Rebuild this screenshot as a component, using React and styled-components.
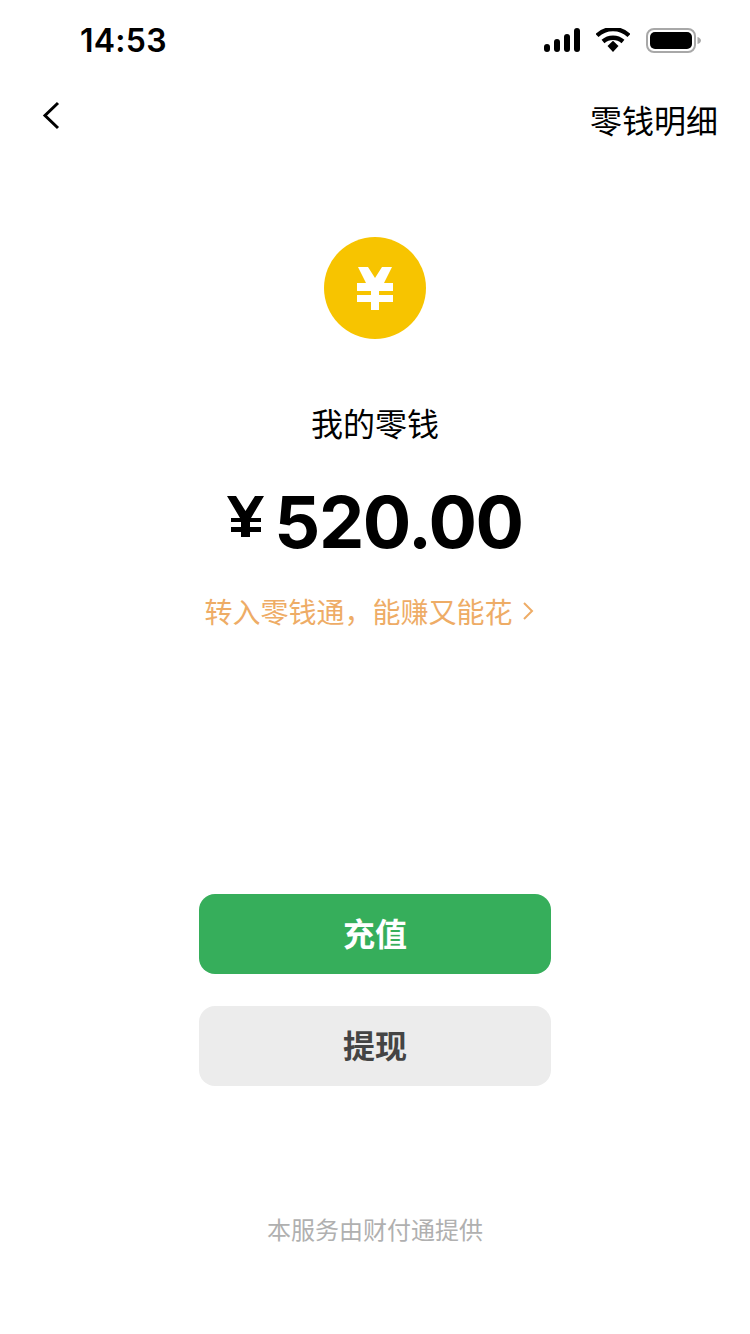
import React from "react";
import styled, { createGlobalStyle } from "styled-components";

const GlobalStyle = createGlobalStyle`
  html, body {
    margin: 0;
    padding: 0;
    background: #ffffff;
    font-family: "Noto Sans CJK SC", "Liberation Sans", sans-serif;
  }
`;

const Page = styled.div`
  width: 750px;
  height: 1334px;
  display: flex;
  flex-direction: column;
  overflow: hidden;
  background: #ffffff;
  color: #000000;
`;

const StatusBar = styled.div`
  height: 80px;
  padding: 0 49px 0 80px;
  display: flex;
  align-items: center;
  justify-content: space-between;
  box-sizing: border-box;
`;

const Time = styled.span`
  font-family: "Inter", "Liberation Sans", sans-serif;
  font-size: 32px;
  font-weight: 600;
  letter-spacing: 0.25px;
  color: #000000;
`;

const StatusIcons = styled.div`
  display: flex;
  align-items: center;
  gap: 16px;
`;

const NavBar = styled.div`
  height: 80px;
  padding: 0 32px 0 40px;
  display: flex;
  align-items: center;
  justify-content: space-between;
  box-sizing: border-box;
`;

const BackButton = styled.div`
  display: flex;
  margin-top: -8px;
`;

const NavTitle = styled.span`
  font-size: 32px;
  line-height: 44px;
  margin-top: -3px;
`;

const Main = styled.div`
  display: flex;
  flex-direction: column;
  align-items: center;
`;

const Coin = styled.div`
  width: 102px;
  height: 102px;
  margin-top: 77px;
  border-radius: 50%;
  background: #f7c400;
  display: flex;
  align-items: center;
  justify-content: center;
`;

const Label = styled.div`
  margin-top: 61px;
  font-size: 32px;
  line-height: 44px;
`;

const Amount = styled.div`
  margin-top: 32px;
  display: flex;
  align-items: center;
  gap: 10px;
  height: 92px;
`;

const AmountMark = styled.div`
  display: flex;
  margin-top: -11px;
`;

const Digits = styled.span`
  font-family: "Inter", "Liberation Sans", sans-serif;
  font-size: 72px;
  font-weight: 700;
  line-height: 92px;
  letter-spacing: -1.4px;
`;

const PromoLink = styled.div`
  margin-top: 24px;
  padding-right: 12px;
  display: flex;
  align-items: center;
  gap: 9px;
  font-size: 28px;
  line-height: 38px;
  color: #eeac66;
`;

const Actions = styled.div`
  margin-top: 264px;
  display: flex;
  flex-direction: column;
  gap: 32px;
`;

const ActionButton = styled.button`
  width: 352px;
  height: 80px;
  border: 0;
  border-radius: 16px;
  padding: 0 0 4px;
  font-family: inherit;
  font-size: 32px;
  font-weight: 700;
  background: ${(p) => (p.$primary ? "#36ae5b" : "#ececec")};
  color: ${(p) => (p.$primary ? "#ffffff" : "#444444")};
`;

const Footer = styled.div`
  margin-top: 127px;
  font-size: 24px;
  line-height: 32px;
  color: #b0b0b0;
`;

const SignalIcon = () => (
  <svg width="36" height="24" viewBox="0 0 36 24">
    <rect x="0" y="16" width="6" height="8" rx="3" fill="#000" />
    <rect x="10" y="11" width="6" height="13" rx="3" fill="#000" />
    <rect x="20" y="6" width="6" height="18" rx="3" fill="#000" />
    <rect x="30" y="0" width="6" height="24" rx="3" fill="#000" />
  </svg>
);

const WifiIcon = () => (
  <svg width="34" height="24" viewBox="0 0 34 24">
    <path d="M1 7.5C10 -1 24 -1 33 7.5" fill="none" stroke="#000" strokeWidth="4.4" />
    <path d="M7 13.5C12.8 8.5 21.2 8.5 27 13.5" fill="none" stroke="#000" strokeWidth="4.4" />
    <path d="M11.5 18L17 12.8L22.5 18L17 24Z" fill="#000" />
  </svg>
);

const BatteryIcon = () => (
  <svg width="55" height="25" viewBox="0 0 55 25">
    <rect x="1" y="1" width="48" height="23" rx="7" fill="none" stroke="#a8a8a8" strokeWidth="2" />
    <rect x="4" y="4" width="42" height="17" rx="5" fill="#000" />
    <path d="M51.5 9C53.5 9.5 55 11 55 12.5C55 14 53.5 15.5 51.5 16Z" fill="#a8a8a8" />
  </svg>
);

const BackIcon = () => (
  <svg width="22" height="32" viewBox="0 0 22 32">
    <path d="M18 3L5 15.5L18 28" fill="none" stroke="#000" strokeWidth="3" />
  </svg>
);

const YenCoinIcon = () => (
  <svg width="36" height="43" viewBox="0 0 36 43">
    <path d="M1 0H11L18 11L25 0H35L27 16H36V24H22V28H36V35H22V43H14V35H0V28H14V24H0V16H9Z" fill="#fff" />
  </svg>
);

const YenMark = () => (
  <svg width="37" height="41" viewBox="0 0 37 41">
    <path d="M0 0H9L18.5 15L28 0H37L24 22H34V26H23V31H34V36H23V41H14V36H4V31H14V26H4V22H13Z" fill="#000" />
  </svg>
);

const ChevronRight = () => (
  <svg width="12" height="20" viewBox="0 0 12 20">
    <path d="M2 2L10 10L2 18" fill="none" stroke="#eeac66" strokeWidth="2" />
  </svg>
);

export default function App() {
  return (
    <Page>
      <GlobalStyle />
      <StatusBar>
        <Time>14:53</Time>
        <StatusIcons>
          <SignalIcon />
          <WifiIcon />
          <BatteryIcon />
        </StatusIcons>
      </StatusBar>
      <NavBar>
        <BackButton>
          <BackIcon />
        </BackButton>
        <NavTitle>零钱明细</NavTitle>
      </NavBar>
      <Main>
        <Coin>
          <YenCoinIcon />
        </Coin>
        <Label>我的零钱</Label>
        <Amount>
          <AmountMark>
            <YenMark />
          </AmountMark>
          <Digits>520.00</Digits>
        </Amount>
        <PromoLink>
          转入零钱通，能赚又能花
          <ChevronRight />
        </PromoLink>
        <Actions>
          <ActionButton $primary>充值</ActionButton>
          <ActionButton>提现</ActionButton>
        </Actions>
        <Footer>本服务由财付通提供</Footer>
      </Main>
    </Page>
  );
}
